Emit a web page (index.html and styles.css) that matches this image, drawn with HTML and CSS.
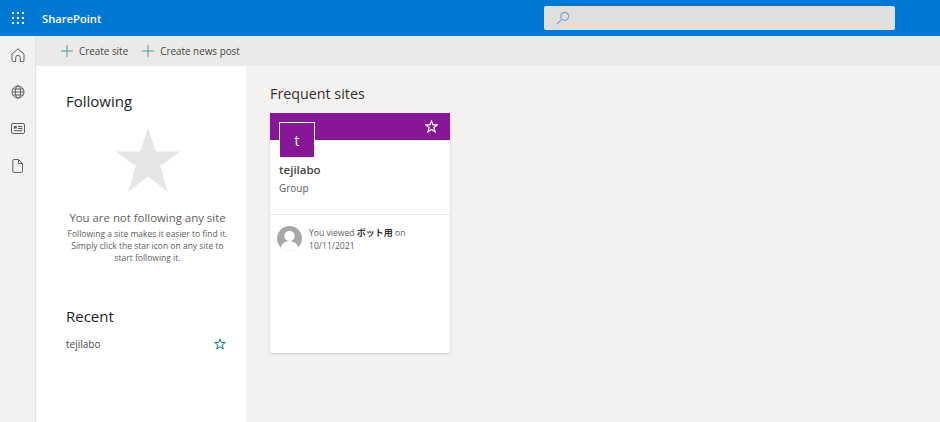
FILE: index.html
```html
<!DOCTYPE html>
<html lang="en">
<head>
<meta charset="utf-8">
<title>SharePoint</title>
<link rel="stylesheet" href="styles.css">
</head>
<body>
<header class="topbar">
  <div class="waffle">
    <svg width="12" height="12" viewBox="0 0 12 12" fill="#fff"><rect width="2" height="2"/><rect x="5" width="2" height="2"/><rect x="10" width="2" height="2"/><rect y="5" width="2" height="2"/><rect x="5" y="5" width="2" height="2"/><rect x="10" y="5" width="2" height="2"/><rect y="10" width="2" height="2"/><rect x="5" y="10" width="2" height="2"/><rect x="10" y="10" width="2" height="2"/></svg>
  </div>
  <div class="brand">SharePoint</div>
  <div class="search">
    <svg width="14" height="14" viewBox="0 0 14 14" fill="none" stroke="#7fa3dc" stroke-width="1.2"><circle cx="8.7" cy="5.3" r="4"/><path d="M5.8 8.2 1 13"/></svg>
  </div>
</header>
<div class="body">
  <nav class="rail">
    <div class="rail-item"><svg width="14" height="14" viewBox="0 0 14 14" fill="none" stroke="#605e5c" stroke-width="1"><path d="M1 6 7 .8 13 6v6.200a1.300 1.300 0 0 1-1.300 1.300H9.300V9.700a2.300 2.300 0 0 0-4.600 0v3.800H2.300A1.300 1.300 0 0 1 1 12.200Z"/></svg></div>
    <div class="rail-item"><svg width="14" height="14" viewBox="0 0 14 14" fill="none" stroke="#605e5c" stroke-width="1"><circle cx="7" cy="7" r="6"/><ellipse cx="7" cy="7" rx="2.600" ry="6"/><path d="M1 7h12M1.800 4h10.400M1.800 10h10.400"/></svg></div>
    <div class="rail-item"><svg width="14" height="11" viewBox="0 0 14 11" fill="none" stroke="#605e5c" stroke-width="1"><rect x="0.500" y="0.500" width="13" height="10" rx="1.500"/><rect x="2.800" y="3" width="3" height="2.600" fill="#605e5c" stroke="none"/><path d="M7 3.500h4.500M7 5.500h4.500M2.800 7.700h8.700"/></svg></div>
    <div class="rail-item"><svg width="11" height="14" viewBox="0 0 11 14" fill="none" stroke="#605e5c" stroke-width="1"><path d="M1.800.5h4.700l4 4v7.900a1 1 0 0 1-1 1H1.800a1 1 0 0 1-1-1V1.500a1 1 0 0 1 1-1ZM6.500.5v4h4"/></svg></div>
  </nav>
  <div class="main">
    <div class="commandbar">
      <div class="cmd">
        <svg class="plus" width="12" height="12" viewBox="0 0 12 12" stroke="#4f9a9b" stroke-width="1"><path d="M6 0v12M0 6h12"/></svg>
        <span>Create site</span>
      </div>
      <div class="cmd">
        <svg class="plus" width="12" height="12" viewBox="0 0 12 12" stroke="#4f9a9b" stroke-width="1"><path d="M6 0v12M0 6h12"/></svg>
        <span>Create news post</span>
      </div>
    </div>
    <div class="content">
      <aside class="side">
        <h2 class="side-title">Following</h2>
        <div class="empty">
          <svg class="empty-star" width="64" height="64" viewBox="0 0 64 64" fill="#e6e5e3"><path d="M32 0l7.600 23.600H64L44.200 38.200 51.800 64 32 48.200 12.200 64l7.600-25.800L0 23.600h24.400Z"/></svg>
          <div class="empty-title">You are not following any site</div>
          <div class="empty-text">Following a site makes it easier to find it.<br>Simply click the star icon on any site to<br>start following it.</div>
        </div>
        <h2 class="side-title recent">Recent</h2>
        <div class="recent-row">
          <span>tejilabo</span>
          <svg width="12" height="12" viewBox="0 0 12 12" fill="none" stroke="#038387" stroke-width="1"><path d="M6 .8 7.400 4.500h3.900L8.200 7l1.100 3.900L6 8.700l-3.300 2.200L3.800 7 .7 4.500h3.900Z"/></svg>
        </div>
      </aside>
      <section class="sites">
        <h2 class="sites-title">Frequent sites</h2>
        <article class="card">
          <div class="banner">
            <svg width="13" height="13" viewBox="0 0 12 12" fill="none" stroke="#fff" stroke-width="1.100"><path d="M6 .8 7.400 4.500h3.900L8.200 7l1.100 3.900L6 8.700l-3.300 2.200L3.800 7 .7 4.500h3.900Z"/></svg>
          </div>
          <div class="logo">t</div>
          <div class="card-info">
            <div class="card-name">tejilabo</div>
            <div class="card-type">Group</div>
          </div>
          <div class="activity">
            <svg class="avatar" width="25" height="25" viewBox="0 0 24 24"><circle cx="12" cy="12" r="12" fill="#a8a8a8"/><circle cx="12" cy="9.500" r="5" fill="#fff"/><path d="M3.500 20.500c1.600-4 4.600-6 8.500-6s6.900 2 8.500 6A12 12 0 0 1 12 24a12 12 0 0 1-8.500-3.500Z" fill="#fff"/></svg>
            <div class="activity-text"><span>You viewed</span> <b>ボット用</b> <span>on</span> <span>10/11/2021</span></div>
          </div>
        </article>
      </section>
    </div>
  </div>
</div>
</body>
</html>
```
FILE: styles.css
```css
* { box-sizing: border-box; }
html, body { margin: 0; height: 100%; overflow: hidden; }
body { width: 940px; height: 422px; font-family: "Open Sans", "Noto Sans", "Noto Sans CJK JP", sans-serif; background: #f3f2f1; color: #323130; display: flex; flex-direction: column; }
.topbar { height: 36px; background: #0078d4; display: flex; align-items: center; flex: none; }
.waffle { width: 36px; display: flex; justify-content: center; }
.waffle svg { display: block; }
.brand { margin-left: 6px; width: 502px; color: #fff; font-size: 11.200px; font-weight: 600; }
.search { width: 351px; height: 24px; background: #e1dfdd; border-radius: 2px; display: flex; align-items: center; padding-left: 12px; }
.body { flex: 1; display: flex; min-height: 0; }
.rail { width: 36px; flex: none; background: #f3f2f1; border-right: 1px solid #e6e5e3; display: flex; flex-direction: column; }
.rail-item { height: 37px; display: flex; align-items: center; justify-content: center; }
.rail svg { display: block; }
.main { flex: 1; display: flex; flex-direction: column; min-width: 0; }
.commandbar { height: 30px; background: #ebeae8; display: flex; align-items: center; padding-left: 25px; gap: 14px; flex: none; }
.cmd { display: flex; align-items: center; gap: 6px; font-size: 9.900px; color: #484644; }
.plus { display: block; }
.content { flex: 1; display: flex; min-height: 0; }
.side { width: 210px; background: #fff; padding: 26px 19px 0 30px; flex: none; }
.side-title { margin: 0; font-size: 15px; font-weight: 400; line-height: 19px; color: #201f1e; }
.empty { display: flex; flex-direction: column; align-items: center; margin: 17px -1px 0 1px; text-align: center; }
.empty-title { margin-top: 18px; font-size: 11.400px; line-height: 16px; color: #605e5c; white-space: nowrap; }
.empty-text { font-size: 8.500px; line-height: 12px; color: #605e5c; white-space: nowrap; margin-top: 2px; }
.recent { margin-top: 43px; }
.recent-row { display: flex; justify-content: space-between; align-items: center; margin-top: 11px; padding-right: 1px; font-size: 10px; color: #484644; line-height: 14px; }
.sites { padding: 18px 0 0 24px; }
.sites-title { margin: 0; font-size: 14.300px; line-height: 20px; font-weight: 500; color: #323130; }
.card { position: relative; width: 180px; height: 240px; margin-top: 9px; background: #fff; border-radius: 2px; box-shadow: 0 1px 3px rgba(0,0,0,.16); }
.banner { height: 27px; background: #881798; display: flex; justify-content: flex-end; align-items: center; padding-right: 12px; }
.banner svg { display: block; }
.logo { position: absolute; left: 9px; top: 9px; width: 36px; height: 36px; background: #881798; border: 1px solid #fff; color: #fff; font-size: 14px; display: flex; align-items: center; justify-content: center; }
.card-info { padding: 22px 9px 0; height: 74px; }
.card-name { font-size: 11.500px; line-height: 16px; font-weight: 600; color: #484644; }
.card-type { font-size: 10px; line-height: 14px; margin-top: 3px; color: #605e5c; }
.activity { display: flex; gap: 7px; border-top: 1px solid #edebe9; padding: 11px 7px 0; }
.avatar { display: block; flex: none; }
.activity-text { font-size: 8.600px; line-height: 13px; width: 112px; color: #605e5c; }
.activity-text b { color: #323130; font-weight: 700; font-size: 9px; }
```
